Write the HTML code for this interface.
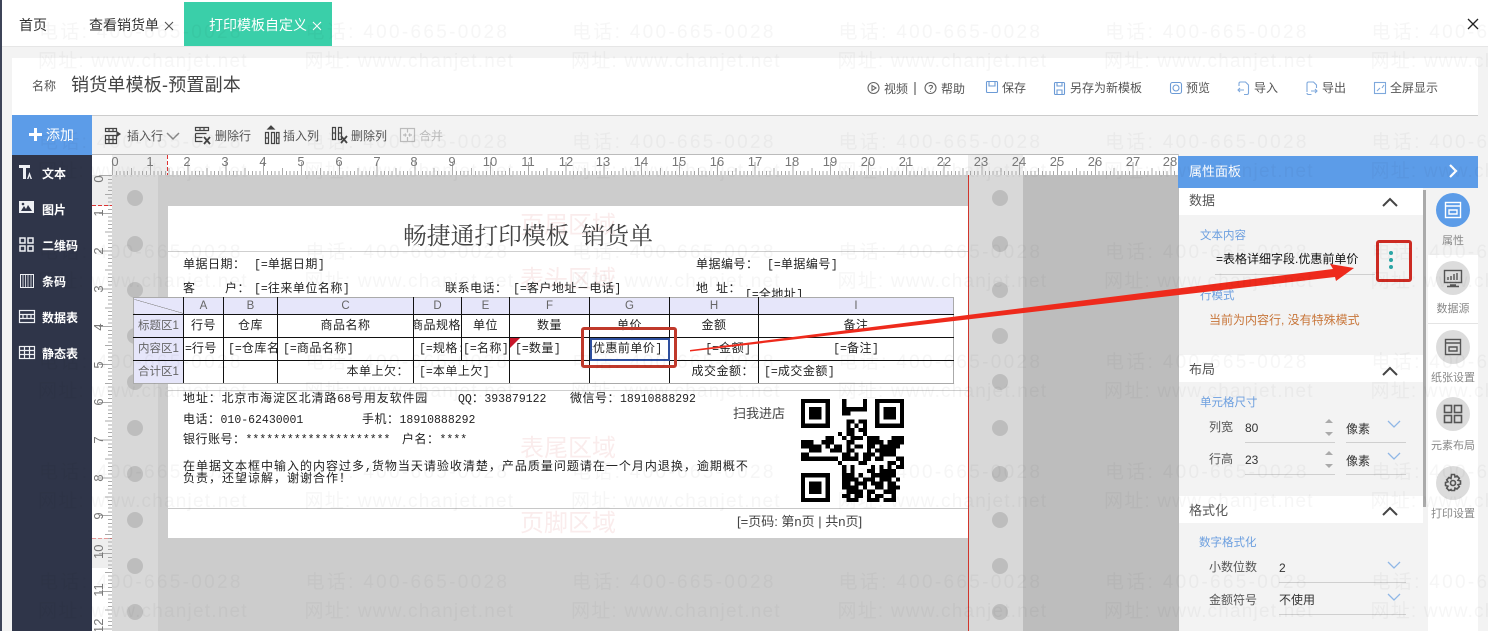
<!DOCTYPE html>
<html lang="zh"><head><meta charset="utf-8"><title>打印模板自定义</title>
<style>
html,body{margin:0;padding:0;width:1488px;height:631px;overflow:hidden;background:#f3f3f3}
body{position:relative;font-family:"Liberation Sans","Noto Sans CJK SC",sans-serif;font-size:12px;color:#444}
.a{position:absolute}
.t{position:absolute;white-space:nowrap;line-height:14px}
.p{position:absolute;white-space:nowrap;line-height:14px;font-family:"Liberation Mono","WenQuanYi Zen Hei","Noto Sans CJK SC",monospace;font-size:12px;letter-spacing:.5px;color:#222}
.p i,table i{font-style:normal;font-size:11.500px;letter-spacing:0}
.b{color:#6c9fdf;font-size:11.500px}
.l{position:absolute;height:1px;background:#cfcfcf}
.c{position:absolute;width:16px;height:16px;border-radius:50%;background:#bdbdbd}
.w{color:#fff;font-weight:bold;font-size:12px}
.rn{position:absolute;top:155px;width:20px;text-align:center;font-size:13px;color:#777;line-height:14px}
.vn{position:absolute;left:92px;width:14px;text-align:center;font-size:13px;color:#777;line-height:14px;transform:rotate(-90deg)}
.g{color:#888;font-size:11px;width:50px;left:1428px;text-align:center}
.ci{position:absolute;left:1436px;width:34px;height:34px;border-radius:50%;background:#dcdcdc}
.ci svg{position:absolute;left:7px;top:7px;width:20px;height:20px;fill:none;stroke:#555;stroke-width:1.4}
table{position:absolute;left:133px;top:297px;width:820px;height:87px;border-collapse:collapse;table-layout:fixed;font-family:"Liberation Mono","WenQuanYi Zen Hei","Noto Sans CJK SC",monospace;font-size:12px;letter-spacing:.5px;color:#222}
td{border:1px solid #111;padding:0;white-space:nowrap;overflow:hidden;text-align:center;background:#fff;line-height:14px}
tr.h td{background:#e6e6fa;font-family:"Liberation Sans",sans-serif;color:#666;font-size:11.500px;letter-spacing:0;border-top-color:#aaa}
td.m{background:#e6e6fa;color:#666;font-family:"Liberation Sans","Noto Sans CJK SC",sans-serif;font-size:11.500px;letter-spacing:0;border-left-color:#aaa}
tr:last-child td{border-bottom-color:#aaa}
td:last-child{border-right-color:#aaa}
td.L{text-align:left;padding-left:5px}
.red{color:rgba(205,70,70,.10);font-size:24px;letter-spacing:0}
</style></head><body>

<div class="a" style="left:0;top:0;width:2px;height:631px;background:#3d4458"></div>
<div class="a" style="left:2px;top:0;width:1486px;height:46px;background:#fff;border-bottom:1px solid #e6e6e6"></div>
<div class="a" style="left:184px;top:2px;width:148px;height:44px;background:#3acfa9"></div>
<div class="t" style="left:19px;top:18px;font-size:14px;color:#333">首页</div>
<div class="t" style="left:89px;top:18px;font-size:14px;color:#333">查看销货单</div>
<svg class="a" style="left:164px;top:21px" width="10" height="10"><path d="M1 1l8 8M9 1l-8 8" stroke="#555" stroke-width="1.100" fill="none"/></svg>
<div class="t" style="left:209px;top:18px;font-size:14px;color:#fff">打印模板自定义</div>
<svg class="a" style="left:312px;top:21px" width="10" height="10"><path d="M1 1l8 8M9 1l-8 8" stroke="#fff" stroke-width="1.100" fill="none"/></svg>
<svg class="a" style="left:1467px;top:18px" width="12" height="12"><path d="M1 1l10 10M11 1L1 11" stroke="#222" stroke-width="1.300" fill="none"/></svg>

<div class="a" style="left:12px;top:58px;width:1466px;height:57px;background:#fff;border-bottom:1px solid #ccc"></div>
<div class="t" style="left:32px;top:79px;font-size:12px;color:#555">名称</div>
<div class="t" style="left:71px;top:76px;font-size:18px;line-height:18px;color:#444;letter-spacing:.2px">销货单模板-预置副本</div>

<svg class="a" style="left:860px;top:78px" width="590" height="22" fill="none" stroke-width="1.100">
<g stroke="#666"><circle cx="13.500" cy="10" r="5.500"/><path d="M12 7.500v5l4-2.500z"/><circle cx="70.500" cy="10" r="5.500"/><path d="M69 8.500c.5-1.500 3.500-1.500 3.500 .2 0 1.300-2 1.300-2 3M70.500 13v.8"/><path d="M55 4v13" stroke="#555"/></g>
<g stroke="#6c9bd6"><rect x="126.500" y="3.500" width="11" height="11" rx="1"/><path d="M129 4v4h6V4"/><rect x="194.500" y="4.500" width="10" height="12" rx="1"/><path d="M197 5v3h5V5M197 16v-4h5v4"/><rect x="310.500" y="4.500" width="11" height="11" rx="2"/><circle cx="316" cy="10" r="3"/></g>
<g stroke="#7ea8dc"><path d="M379 8V5.500c0-1 .5-1.500 1.500-1.500h5l3 3v8c0 1-.5 1.500-1.500 1.500h-3"/><path d="M384 12h-6m2-2l-2 2 2 2"/><path d="M447 14V5.500c0-1 .5-1.500 1.500-1.500h5l3 3v3M447 15c0 1 .5 1.500 1.500 1.500h3"/><path d="M451 13h6m-2-2l2 2-2 2"/><rect x="514.500" y="4.500" width="11" height="11"/><path d="M517 13l3-3M522 10l2-3"/></g>
</svg>
<div class="t" style="left:884px;top:82px;color:#555">视频</div>
<div class="t" style="left:941px;top:82px;color:#555">帮助</div>
<div class="t" style="left:1002px;top:81px;color:#555">保存</div>
<div class="t" style="left:1070px;top:81px;color:#555">另存为新模板</div>
<div class="t" style="left:1186px;top:81px;color:#555">预览</div>
<div class="t" style="left:1254px;top:81px;color:#555">导入</div>
<div class="t" style="left:1322px;top:81px;color:#555">导出</div>
<div class="t" style="left:1390px;top:81px;color:#555">全屏显示</div>

<!-- toolbar -->
<div class="a" style="left:12px;top:115px;width:80px;height:40px;background:#5c9ce8"></div>
<svg class="a" style="left:28px;top:127px" width="15" height="15"><path d="M1 7.500h13M7.500 1v13" stroke="#fff" stroke-width="3"/></svg>
<div class="t" style="left:46px;top:128px;font-size:14px;color:#fff">添加</div>
<svg class="a" style="left:100px;top:124px" width="350" height="24" fill="none" stroke="#444" stroke-width="1.200">
<path d="M5.500 4.500h11v3h-11zM5.500 11.500h11v8h-11zM5.500 15.500h11M9 4.500v3M13 4.500v3M9 11.500v8M13 11.500v8"/><path d="M20 10l-3-2v4z" fill="#444"/>
<path d="M67 9l6 6 6-6" stroke="#888" stroke-width="1.500"/>
<path d="M95.500 3.500h13v3h-13zM95.500 9.500h11M95.500 9.500v8h7M95.500 13.500h7M100 3.500v3M104 3.500v3"/><path d="M104 13l6 7M110 13l-6 7" stroke-width="1.800"/>
<path d="M165.500 8.500h3v11h-3zM171.500 8.500h3v11h-3zM176.500 8.500h2.500v11h-2.500zM165.500 14h3M176.500 14h3"/><path d="M171 2l3 3h-6z" fill="#444"/>
<path d="M232.500 3.500h3v12h-3zM238.500 3.500h3v12h-3zM232.500 9h3M238.500 9h3"/><path d="M241 12l6 7M247 12l-6 7" stroke-width="1.800"/>
<g stroke="#bbb"><rect x="300.500" y="4.500" width="14" height="13"/><path d="M307.500 4.500v4M307.500 13v4.500M303 11h3m-1-1.500l1 1.500-1 1.500M312 11h-3m1-1.500l-1 1.500 1 1.500"/></g>
</svg>
<div class="t" style="left:127px;top:129px;color:#555">插入行</div>
<div class="t" style="left:215px;top:129px;color:#555">删除行</div>
<div class="t" style="left:283px;top:129px;color:#555">插入列</div>
<div class="t" style="left:351px;top:129px;color:#555">删除列</div>
<div class="t" style="left:419px;top:129px;color:#bbb">合并</div>

<!-- sidebar -->
<div class="a" style="left:12px;top:155px;width:80px;height:476px;background:#2f3549"></div>
<svg class="a" style="left:18px;top:164px" width="18" height="200" fill="#eef0f4" stroke="#eef0f4">
<path d="M1 1h11v3H8v11H5V4H1z" stroke="none"/><path d="M9 15l2.500-7 2.500 7h-1.500l-1-3-1 3z" stroke="none"/>
<rect x="1" y="37" width="15" height="12" stroke="none"/><path d="M3 47l3-5 2 3 2-4 4 6z" fill="#2f3549" stroke="none"/><circle cx="5" cy="40" r="1.300" fill="#2f3549" stroke="none"/>
<g fill="none" stroke-width="1.500"><rect x="2" y="74" width="5" height="5"/><rect x="10" y="74" width="5" height="5"/><rect x="2" y="82" width="5" height="5"/><rect x="10" y="82" width="5" height="5"/></g>
<g fill="none" stroke-width="1"><rect x="2.500" y="110.500" width="13" height="13"/><path d="M5 111v12M7.500 111v12M10 111v12M13 111v12" stroke-width=".8"/></g>
<g fill="none" stroke-width="1.200"><rect x="1.500" y="146.500" width="15" height="12"/><path d="M1.500 150.500h15M1.500 154.500h15M5 151v3M9 151v3M13 151v3"/></g>
<g fill="none" stroke-width="1.200"><rect x="1.500" y="182.500" width="15" height="12"/><path d="M1.500 186.500h15M1.500 190.500h15M6.500 183v11M11.500 183v11"/></g>
</svg>
<div class="t w" style="left:42px;top:167px">文本</div>
<div class="t w" style="left:42px;top:203px">图片</div>
<div class="t w" style="left:42px;top:239px">二维码</div>
<div class="t w" style="left:42px;top:275px">条码</div>
<div class="t w" style="left:42px;top:311px">数据表</div>
<div class="t w" style="left:42px;top:347px">静态表</div>

<!-- canvas -->
<div class="a" style="left:92px;top:154px;width:1087px;height:477px;background:#ccc"></div>
<div class="a" style="left:1023px;top:175px;width:156px;height:456px;background:#bdbdbd"></div>
<div class="a" style="left:112px;top:175px;width:46px;height:456px;background:#d8d8d8"></div>
<div class="a" style="left:968px;top:175px;width:55px;height:456px;background:#d8d8d8"></div>

<!-- horizontal ruler -->
<div class="a" style="left:92px;top:154px;width:1086px;height:21px;background:#fff;border-top:1px solid #bbb;box-sizing:border-box"></div>
<div class="a" style="left:112px;top:155px;width:55px;height:20px;background:#eee"></div>
<div class="a" style="left:968px;top:155px;width:55px;height:20px;background:#eee"></div>
<div class="a" style="left:112px;top:171px;width:1066px;height:4px;background:repeating-linear-gradient(to right,#aaa 0 1px,transparent 1px 3.78px)"></div>
<div class="a" style="left:112px;top:168px;width:1066px;height:7px;background:repeating-linear-gradient(to right,#aaa 0 1px,transparent 1px 18.9px)"></div>
<div class="a" style="left:112px;top:162px;width:1066px;height:13px;background:repeating-linear-gradient(to right,#aaa 0 1px,transparent 1px 37.8px)"></div>
<div class="a" style="left:167px;top:155px;width:1px;height:20px;background:repeating-linear-gradient(to bottom,#d33 0 4px,transparent 4px 6px)"></div>
<div class="rn" style="left:105px">0</div><div class="rn" style="left:140px">1</div><div class="rn" style="left:177px">2</div><div class="rn" style="left:215px">3</div><div class="rn" style="left:253px">4</div><div class="rn" style="left:291px">5</div><div class="rn" style="left:329px">6</div><div class="rn" style="left:367px">7</div><div class="rn" style="left:404px">8</div><div class="rn" style="left:442px">9</div><div class="rn" style="left:480px">10</div><div class="rn" style="left:518px">11</div><div class="rn" style="left:556px">12</div><div class="rn" style="left:593px">13</div><div class="rn" style="left:631px">14</div><div class="rn" style="left:669px">15</div><div class="rn" style="left:707px">16</div><div class="rn" style="left:745px">17</div><div class="rn" style="left:782px">18</div><div class="rn" style="left:820px">19</div><div class="rn" style="left:858px">20</div><div class="rn" style="left:896px">21</div><div class="rn" style="left:934px">22</div><div class="rn" style="left:971px">23</div><div class="rn" style="left:1009px">24</div><div class="rn" style="left:1047px">25</div><div class="rn" style="left:1085px">26</div><div class="rn" style="left:1123px">27</div><div class="rn" style="left:1160px">28</div>

<!-- vertical ruler -->
<div class="a" style="left:92px;top:175px;width:20px;height:456px;background:#fff"></div>
<div class="a" style="left:92px;top:175px;width:20px;height:31px;background:#eee"></div>
<div class="a" style="left:92px;top:538px;width:20px;height:30px;background:#eee"></div>
<div class="a" style="left:108px;top:175px;width:4px;height:456px;background:repeating-linear-gradient(to bottom,#aaa 0 1px,transparent 1px 3.78px)"></div>
<div class="a" style="left:105px;top:175px;width:7px;height:456px;background:repeating-linear-gradient(to bottom,#aaa 0 1px,transparent 1px 18.9px)"></div>
<div class="a" style="left:99px;top:175px;width:13px;height:456px;background:repeating-linear-gradient(to bottom,#aaa 0 1px,transparent 1px 37.8px)"></div>
<div class="a" style="left:92px;top:205px;width:20px;height:1px;background:repeating-linear-gradient(to right,#d33 0 4px,transparent 4px 6px)"></div>
<div class="a" style="left:92px;top:538px;width:20px;height:1px;opacity:.45;background:repeating-linear-gradient(to right,#d33 0 4px,transparent 4px 6px)"></div>
<div class="vn" style="top:172px">0</div><div class="vn" style="top:206px">1</div><div class="vn" style="top:244px">2</div><div class="vn" style="top:282px">3</div><div class="vn" style="top:320px">4</div><div class="vn" style="top:358px">5</div><div class="vn" style="top:395px">6</div><div class="vn" style="top:433px">7</div><div class="vn" style="top:471px">8</div><div class="vn" style="top:509px">9</div><div class="vn" style="top:545px">10</div><div class="vn" style="top:583px">11</div><div class="vn" style="top:619px">12</div>

<!-- perforation circles -->
<div class="c" style="left:127px;top:190px"></div><div class="c" style="left:127px;top:236px"></div><div class="c" style="left:127px;top:282px"></div><div class="c" style="left:127px;top:328px"></div><div class="c" style="left:127px;top:374px"></div><div class="c" style="left:127px;top:420px"></div><div class="c" style="left:127px;top:466px"></div><div class="c" style="left:127px;top:512px"></div><div class="c" style="left:127px;top:558px"></div><div class="c" style="left:127px;top:604px"></div>
<div class="c" style="left:992px;top:190px"></div><div class="c" style="left:992px;top:236px"></div><div class="c" style="left:992px;top:282px"></div><div class="c" style="left:992px;top:328px"></div><div class="c" style="left:992px;top:374px"></div><div class="c" style="left:992px;top:420px"></div><div class="c" style="left:992px;top:466px"></div><div class="c" style="left:992px;top:512px"></div><div class="c" style="left:992px;top:558px"></div><div class="c" style="left:992px;top:604px"></div>

<!-- paper -->
<div class="a" style="left:168px;top:206px;width:800px;height:332px;background:#fff"></div>
<div class="a" style="left:968px;top:175px;width:1px;height:456px;background:#d0352b"></div>
<div class="l" style="left:168px;top:251px;width:800px"></div>
<div class="l" style="left:168px;top:390px;width:800px"></div>
<div class="l" style="left:168px;top:508px;width:800px;background:#c8c8c8"></div>
<div class="t red" style="left:520px;top:219px">页眉区域</div>
<div class="t red" style="left:520px;top:273px">表头区域</div>
<div class="t red" style="left:520px;top:442px">表尾区域</div>
<div class="t red" style="left:520px;top:517px">页脚区域</div>

<div class="t" style="left:403px;top:225px;font-size:23.800px;line-height:24px;font-family:'Liberation Serif','Noto Serif CJK SC',serif;color:#444">畅捷通打印模板&nbsp;&nbsp;销货单</div>
<div class="p" style="left:183px;top:258px">单据日期：</div>
<div class="p" style="left:254px;top:258px"><i>[=</i>单据日期<i>]</i></div>
<div class="p" style="left:696px;top:258px">单据编号：</div>
<div class="p" style="left:767px;top:258px"><i>[=</i>单据编号<i>]</i></div>
<div class="p" style="left:183px;top:282px">客</div>
<div class="p" style="left:225px;top:282px">户：</div>
<div class="p" style="left:254px;top:282px"><i>[=</i>往来单位名称<i>]</i></div>
<div class="p" style="left:445px;top:282px">联系电话：</div>
<div class="p" style="left:513px;top:282px"><i>[=</i>客户地址－电话<i>]</i></div>
<div class="p" style="left:696px;top:282px">地</div>
<div class="p" style="left:716px;top:282px">址：</div>
<div class="p" style="left:745px;top:288px"><i>[=</i>全地址<i>]</i></div>

<table>
<colgroup><col style="width:50px"><col style="width:40px"><col style="width:54px"><col style="width:136px"><col style="width:48px"><col style="width:48px"><col style="width:80px"><col style="width:80px"><col style="width:89px"><col style="width:195px"></colgroup>
<tr class="h" style="height:17px"><td style="background:linear-gradient(16deg,#e6e6fa 49%,#888 49.500%,#888 51%,#e6e6fa 51.500%);border-left-color:#aaa"></td><td>A</td><td>B</td><td>C</td><td>D</td><td>E</td><td>F</td><td>G</td><td>H</td><td>I</td></tr>
<tr style="height:23px"><td class="m">标题区1</td><td>行号</td><td>仓库</td><td>商品名称</td><td style="text-align:left;text-indent:-3px">商品规格</td><td>单位</td><td>数量</td><td>单价</td><td>金额</td><td>备注</td></tr>
<tr style="height:23px"><td class="m">内容区1</td><td style="text-align:left;padding-left:1px"><i>=</i>行号</td><td class="L" style="padding-left:4px"><i>[=</i>仓库名</td><td class="L"><i>[=</i>商品名称<i>]</i></td><td class="L" style="padding-left:5px"><i>[=</i>规格<i>:</i></td><td style="text-align:left;padding-left:1px"><i>[=</i>名称<i>]</i></td><td class="L"><i>[=</i>数量<i>]</i></td><td style="text-align:left;text-indent:-4px"><i>=</i>优惠前单价<i>]</i></td><td style="text-align:right;padding-right:7px"><i>[=</i>金额<i>]</i></td><td><i>[=</i>备注<i>]</i></td></tr>
<tr style="height:23px"><td class="m">合计区1</td><td></td><td></td><td style="text-align:right;padding-right:4px">本单上欠：</td><td colspan="2" class="L"><i>[=</i>本单上欠<i>]</i></td><td></td><td></td><td style="text-align:right;padding-right:4px">成交金额：</td><td class="L"><i>[=</i>成交金额<i>]</i></td></tr>
</table>
<svg class="a" style="left:510px;top:338px" width="10" height="10"><path d="M0 0h10L0 10z" fill="#c8172a"/></svg>

<div class="p" style="left:183px;top:392px;letter-spacing:.85px">地址：北京市海淀区北清路<i>68</i>号用友软件园</div>
<div class="p" style="left:458px;top:392px"><i>QQ</i>：<i>393879122</i></div>
<div class="p" style="left:570px;top:392px">微信号：<i>18910888292</i></div>
<div class="p" style="left:183px;top:413px">电话：<i>010-62430001</i></div>
<div class="p" style="left:362px;top:413px">手机：<i>18910888292</i></div>
<div class="p" style="left:183px;top:433px">银行账号：<i>*********************</i></div>
<div class="p" style="left:402px;top:433px">户名：<i>****</i></div>
<div class="p" style="left:183px;top:460px;letter-spacing:1px">在单据文本框中输入的内容过多<i>,</i>货物当天请验收清楚，产品质量问题请在一个月内退换，逾期概不</div>
<div class="p" style="left:183px;top:472px;letter-spacing:1px">负责，还望谅解，谢谢合作！</div>
<div class="t" style="left:733px;top:407px;font-size:13px;color:#444">扫我进店</div>
<div class="t" style="left:737px;top:515px;font-size:13px;color:#444">[=页码: 第n页 | 共n页]</div>

<!-- QR -->
<svg class="a" style="left:801px;top:399px" width="103" height="103" viewBox="0 0 25 25" shape-rendering="crispEdges">
<g fill="none" stroke="#000"><rect x=".5" y=".5" width="6" height="6"/><rect x="18.500" y=".5" width="6" height="6"/><rect x=".5" y="18.500" width="6" height="6"/></g>
<rect x="2" y="2" width="3" height="3"/><rect x="20" y="2" width="3" height="3"/><rect x="2" y="20" width="3" height="3"/>
<path stroke="#000" stroke-width="1" fill="none" d="M10 .5h1M15 .5h1M10 1.500h1M15 1.500h1M10 2.500h6M10 3.500h2M11 5.500h2M14 5.500h2M11 6.500h1M13 6.500h1M15 6.500h1M11 7.500h2M14 7.500h2M9 8.500h1M11 8.500h2M15 8.500h1
M6 9.500h2M10 9.500h1M12 9.500h3M16 9.500h3M22 9.500h3
M0 10.500h3M5 10.500h3M11 10.500h2M16 10.500h4M21 10.500h4
M0 11.500h5M6 11.500h1M8 11.500h2M11 11.500h1M13 11.500h2M16 11.500h2M19 11.500h5
M2 12.500h3M7 12.500h3M11 12.500h2M16 12.500h1M18 12.500h5
M0 13.500h2M10 13.500h2M13 13.500h1M15 13.500h3M19 13.500h4
M0 14.500h9M10 14.500h4M15 14.500h2M18 14.500h2M23 14.500h2
M9 15.500h1M14 15.500h2M21 15.500h2M24 15.500h1
M10 16.500h1M12 16.500h1M17 16.500h1M19 16.500h1M21 16.500h1M23 16.500h2
M10 17.500h1M12 17.500h1M16 17.500h2M19 17.500h4
M10 18.500h3M14 18.500h1M17 18.500h6
M10 19.500h4M15 19.500h3M19 19.500h3M23 19.500h1
M10 20.500h2M13 20.500h3M17 20.500h3M21 20.500h2
M10 21.500h4M15 21.500h1M18 21.500h2M21 21.500h3
M11 22.500h4M16 22.500h2M20 22.500h3
M10 23.500h2M13 23.500h2M16 23.500h1M18 23.500h2M22 23.500h1
M11 24.500h3M16 24.500h3M20 24.500h3"/>
</svg>

<!-- right panel -->
<div class="a" style="left:1178px;top:188px;width:246px;height:443px;background:#f3f3f3;border-left:1px solid #bbb;box-sizing:border-box"></div>
<div class="a" style="left:1428px;top:188px;width:50px;height:443px;background:#fff"></div>
<div class="a" style="left:1426px;top:188px;width:52px;height:67px;background:#f3f3f3"></div>
<div class="a" style="left:1478px;top:155px;width:10px;height:476px;background:#f3f3f3"></div>
<div class="a" style="left:1178px;top:156px;width:300px;height:32px;background:#5c9ce8"></div>
<div class="t" style="left:1189px;top:165px;font-size:13px;color:#fff">属性面板</div>
<svg class="a" style="left:1447px;top:163px" width="12" height="16"><path d="M3 2l6 6-6 6" fill="none" stroke="#fff" stroke-width="2.200"/></svg>
<div class="a" style="left:1423px;top:190px;width:3px;height:317px;background:#aaa"></div>

<div class="a" style="left:1179px;top:188px;width:244px;height:27px;background:#fff"></div>
<div class="a" style="left:1179px;top:355px;width:244px;height:27px;background:#fff"></div>
<div class="a" style="left:1179px;top:496px;width:244px;height:27px;background:#fff"></div>
<div class="t" style="left:1189px;top:194px;font-size:13px;color:#555">数据</div>
<div class="t" style="left:1189px;top:363px;font-size:13px;color:#555">布局</div>
<div class="t" style="left:1189px;top:504px;font-size:13px;color:#555">格式化</div>
<svg class="a" style="left:1380px;top:194px" width="20" height="330" fill="none" stroke="#444" stroke-width="2"><path d="M3 12l7-7 7 7M3 181l7-7 7 7M3 321l7-7 7 7"/></svg>

<div class="t b" style="left:1200px;top:229px">文本内容</div>
<div class="t" style="left:1216px;top:252px;color:#111;font-size:12px">=表格详细字段.优惠前单价</div>
<div class="l" style="left:1215px;top:274px;width:160px"></div>
<div class="t b" style="left:1200px;top:289px">行模式</div>
<div class="t" style="left:1209px;top:313px;color:#c8763a">当前为内容行, 没有特殊模式</div>
<div class="t b" style="left:1200px;top:396px">单元格尺寸</div>
<div class="t" style="left:1209px;top:420px;color:#555">列宽</div><div class="t" style="left:1245px;top:421px;color:#333">80</div><div class="t" style="left:1346px;top:422px;color:#333">像素</div>
<div class="t" style="left:1209px;top:452px;color:#555">行高</div><div class="t" style="left:1245px;top:453px;color:#333">23</div><div class="t" style="left:1346px;top:454px;color:#333">像素</div>
<div class="l" style="left:1245px;top:442px;width:90px"></div><div class="l" style="left:1346px;top:442px;width:60px"></div>
<div class="l" style="left:1245px;top:474px;width:90px"></div><div class="l" style="left:1346px;top:474px;width:60px"></div>
<svg class="a" style="left:1322px;top:417px" width="14" height="54" fill="#aaa"><path d="M3 6l4-4 4 4zM3 15l4 4 4-4zM3 38l4-4 4 4zM3 47l4 4 4-4z"/></svg>
<svg class="a" style="left:1386px;top:419px" width="16" height="190" fill="none" stroke="#8fb7e6" stroke-width="1.300"><path d="M2 2l6 6 6-6M2 34l6 6 6-6M2 143l6 6 6-6M2 175l6 6 6-6"/></svg>
<div class="t b" style="left:1199px;top:536px">数字格式化</div>
<div class="t" style="left:1209px;top:560px;color:#555">小数位数</div><div class="t" style="left:1279px;top:561px;color:#333">2</div>
<div class="t" style="left:1209px;top:593px;color:#555">金额符号</div><div class="t" style="left:1279px;top:593px;color:#333">不使用</div>
<div class="l" style="left:1279px;top:582px;width:127px"></div>
<div class="l" style="left:1279px;top:614px;width:127px"></div>

<!-- rail -->
<div class="ci" style="top:193px;background:#5c9ce8"><svg viewBox="0 0 20 20" style="stroke:#fff"><rect x="2.500" y="2.500" width="15" height="15"/><path d="M2.500 6h15M6 10h8v4H6z"/></svg></div>
<div class="ci" style="top:261px"><svg viewBox="0 0 20 20"><rect x="1.500" y="2.500" width="17" height="12"/><path d="M5 12v-3M8 12V8M11 12V6M14 12V5M7 17h6M4 18.500h12"/></svg></div>
<div class="ci" style="top:330px"><svg viewBox="0 0 20 20"><rect x="2.500" y="2.500" width="15" height="15"/><path d="M2.500 6h15M6 10h8v4H6z"/></svg></div>
<div class="ci" style="top:397px"><svg viewBox="0 0 20 20" style="stroke-width:1.600"><rect x="1.500" y="1.500" width="7" height="7"/><rect x="11.500" y="1.500" width="7" height="7"/><rect x="1.500" y="11.500" width="7" height="7"/><rect x="11.500" y="11.500" width="7" height="7"/></svg></div>
<div class="ci" style="top:466px"><svg viewBox="0 0 20 20" style="stroke-width:1.600"><circle cx="10" cy="10" r="2.500"/><path d="M8.500 1.500h3l.5 2.500 2-1 2.300 2.300-1.300 2 2.500.7v3l-2.500.7 1.300 2-2.300 2.300-2-1-.5 2.500h-3L8 16.500l-2 1-2.300-2.300 1.300-2-2.500-.7v-3L5 8.800l-1.300-2L6 4.500l2 1z"/></svg></div>
<div class="t g" style="top:234px">属性</div>
<div class="t g" style="top:302px">数据源</div>
<div class="a" style="left:1428px;top:323px;width:50px;height:1px;background:#e4e4e4"></div>
<div class="t g" style="top:371px">纸张设置</div>
<div class="t g" style="top:439px">元素布局</div>
<div class="t g" style="top:507px">打印设置</div>

<!-- annotations -->
<div class="a" style="left:590px;top:338px;width:80px;height:23px;border:2.500px solid #2e4f9e;box-sizing:border-box"></div>
<div class="a" style="left:581px;top:327px;width:96px;height:41px;border:3px solid #c0392b;border-radius:3px;box-sizing:border-box"></div>
<div class="a" style="left:1376px;top:240px;width:36px;height:42px;border:3px solid #cc2a22;border-radius:3px;box-sizing:border-box"></div>
<svg class="a" style="left:1385px;top:249px" width="12" height="24" fill="#2aa5a5"><circle cx="6" cy="4" r="2"/><circle cx="6" cy="11" r="2"/><circle cx="6" cy="18" r="2"/></svg>
<svg class="a" style="left:0;top:0" width="1488" height="631"><polygon points="690,350 1333,269 1330,264 1354,268 1336,281 1335,277 690,351.500" fill="#ee2a1c"/></svg>

<!-- watermark -->
<svg class="a" style="left:0;top:0;pointer-events:none" width="1488" height="631">
<defs><pattern id="wm" x="39" y="0" width="266.500" height="110" patternUnits="userSpaceOnUse">
<text x="0" y="38" font-family="Liberation Sans,Noto Sans CJK SC,sans-serif" font-size="19" letter-spacing="2.300" fill="rgba(0,0,0,.035)">电话: 400-665-0028</text>
<text x="-1" y="67" font-family="Liberation Sans,Noto Sans CJK SC,sans-serif" font-size="19" letter-spacing="1.200" fill="rgba(0,0,0,.035)">网址: www.chanjet.net</text>
</pattern></defs>
<rect width="1488" height="631" fill="url(#wm)"/>
</svg>
</body></html>
